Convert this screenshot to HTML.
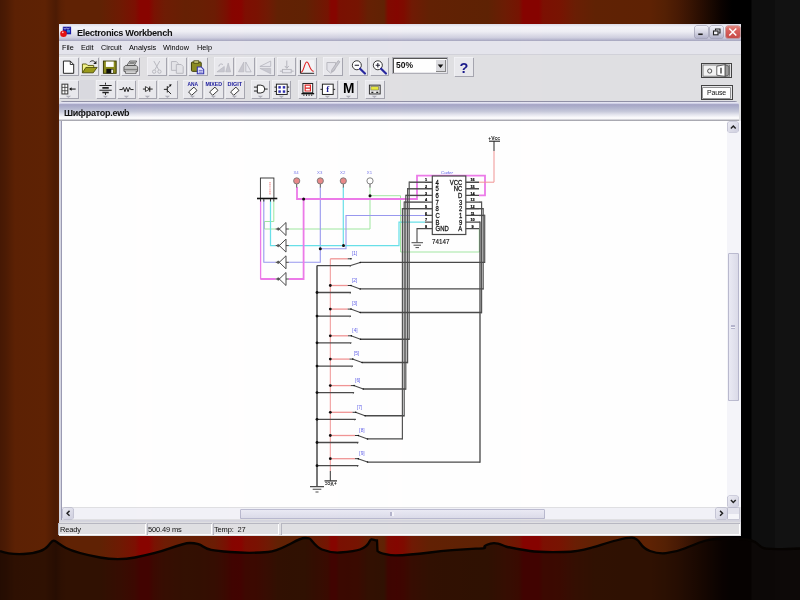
<!DOCTYPE html>
<html><head><meta charset="utf-8"><title>Electronics Workbench</title>
<style>
html,body{margin:0;padding:0;}
body{width:800px;height:600px;overflow:hidden;position:relative;background:#000;font-family:"Liberation Sans",sans-serif;}
#bg{position:absolute;left:0;top:0;width:800px;height:600px;}
#win{opacity:0.999;position:absolute;left:59px;top:24px;width:682px;height:512px;background:#e0e0e3;}
.abs{position:absolute;}
#title{left:0;top:0;width:682px;height:16.500px;background:linear-gradient(#dcdce8 0%,#f4f4fa 18%,#eeeef4 45%,#d0d0e0 80%,#b4b4cc 94%,#a4a4bc 100%);}
#title span{position:absolute;left:17.900px;top:3.500px;font-size:9.200px;font-weight:bold;color:#111;letter-spacing:-0.320px;white-space:nowrap;}
#menu{left:0;top:16.500px;width:682px;height:13.500px;background:#e5e5ed;font-size:7.300px;color:#000;border-bottom:1px solid #d2d2da;}
#menu span{position:absolute;top:2.600px;}
.tb{position:absolute;width:19px;height:19px;background:#e9e9ed;box-shadow:inset 0.700px 0.700px 0 #f4f4f8,inset -1px -1px 0 #a6a6b0;}
#ctitle{left:0.300px;top:76.500px;width:680.200px;height:20.200px;border-radius:4.500px 4.500px 0 0;background:linear-gradient(#8c8ca2 0%,#9494aa 4%,#f0f0fc 8%,#d4d4ea 12%,#a6a6c6 18%,#b4b6d0 35%,#c6c9da 52%,#e4e5ee 68%,#f4f4f8 78%,#fff 86%,#ececf0 91%,#a2a2aa 96%,#b8b8c0 100%);}
#ctitle span{position:absolute;left:5px;top:7.400px;font-size:9px;font-weight:bold;color:#111;letter-spacing:-0.250px;white-space:nowrap;}
#canvas{left:3px;top:97px;width:665px;height:386px;background:#fff;}
#vsb{left:668px;top:97px;width:14px;height:386px;background:#f5f5fa;}
#hsb{left:3px;top:484px;width:665px;height:11px;background:#f2f2f8;}
#status{left:0;top:499.400px;width:682px;height:13px;font-size:7.500px;letter-spacing:-0.160px;color:#111;}
.sp{position:absolute;top:0;height:12px;box-shadow:inset 1px 1px 0 #b8b8c2,inset -1px -1px 0 #fff;}
.sp span{position:absolute;left:1px;top:2px;white-space:pre;}
.sbb{position:absolute;width:10.600px;height:10.600px;background:linear-gradient(135deg,#ececf4,#d0d0e0);border-radius:1.500px;box-shadow:0 0 0 0.600px #a8a8c0;}
.sbb svg{display:block;width:10.600px;height:10.600px;}
.tb svg{display:block;}
.tb.flat{background:#dadae0;box-shadow:none;}
.combo{position:absolute;background:#fff;box-shadow:inset 1px 1px 0 #555,inset -1px -1px 0 #e8e8ec,0 0 0 1px #b0b0b8;}
.combo span{position:absolute;left:3px;top:2.500px;font-size:8.500px;font-weight:bold;color:#111;}
.combo .dd{position:absolute;right:1px;top:1px;width:11px;height:13.400px;background:#dcdce0;box-shadow:inset 1px 1px 0 #fff,inset -1px -1px 0 #888;}
.q{position:absolute;left:0;top:2.500px;width:100%;text-align:center;font-size:14.500px;font-weight:bold;color:#1c1c8c;line-height:17px;}
#circ{position:absolute;left:0;top:0;width:800px;height:600px;}
.cb{position:absolute;top:2.400px;height:12px;border-radius:2px;box-shadow:0 0 0 0.600px #8c8ca4;background:linear-gradient(#f2f2fa 0%,#dcdce8 45%,#b4b4cc 100%);}
.cb svg{display:block;width:100%;height:100%;}
#pwr{left:642.300px;top:38.700px;width:30.700px;height:15px;background:#ececee;box-shadow:inset 0 0 0 1px #444;}
#pause{left:642.300px;top:61.400px;width:31.400px;height:15px;background:#d4d4d8;box-shadow:inset 0 0 0 1px #444,inset 0 0 0 2px #e8e8ea;}
#pause div{position:absolute;left:2.200px;top:2.300px;right:2.200px;bottom:2.700px;background:#fff;box-shadow:0 0 0 0.700px #777;font-size:7px;text-align:center;line-height:10px;color:#111;letter-spacing:-0.200px;}
.thumb{position:absolute;background:linear-gradient(90deg,#ececf6,#dadae8);border-radius:1.500px;box-shadow:inset 0 0 0 0.800px #aeaec6;}
#win span,#pause div,.tb svg{will-change:transform;}
</style></head><body>
<svg id="bg" viewBox="0 0 800 600">
<defs>
<linearGradient id="stripes" x1="0" x2="1" y1="0" y2="0">
<stop offset="0.0000" stop-color="#451804"/>
<stop offset="0.0075" stop-color="#4c1b04"/>
<stop offset="0.0187" stop-color="#5c2104"/>
<stop offset="0.0563" stop-color="#5e2204"/>
<stop offset="0.0638" stop-color="#541e04"/>
<stop offset="0.0700" stop-color="#4c1b04"/>
<stop offset="0.0762" stop-color="#5a2004"/>
<stop offset="0.0825" stop-color="#602204"/>
<stop offset="0.1250" stop-color="#602204"/>
<stop offset="0.1500" stop-color="#6e1a03"/>
<stop offset="0.1688" stop-color="#7c1002"/>
<stop offset="0.1750" stop-color="#880400"/>
<stop offset="0.1862" stop-color="#880400"/>
<stop offset="0.1925" stop-color="#7a1202"/>
<stop offset="0.2062" stop-color="#6e1c04"/>
<stop offset="0.2313" stop-color="#662004"/>
<stop offset="0.2500" stop-color="#681f04"/>
<stop offset="0.2687" stop-color="#6c1c04"/>
<stop offset="0.2825" stop-color="#7a1002"/>
<stop offset="0.2900" stop-color="#860500"/>
<stop offset="0.3013" stop-color="#880400"/>
<stop offset="0.3063" stop-color="#7e0e02"/>
<stop offset="0.3212" stop-color="#7a1202"/>
<stop offset="0.3350" stop-color="#701a04"/>
<stop offset="0.3475" stop-color="#622104"/>
<stop offset="0.3812" stop-color="#602204"/>
<stop offset="0.3975" stop-color="#6c1a03"/>
<stop offset="0.4100" stop-color="#761402"/>
<stop offset="0.4138" stop-color="#860500"/>
<stop offset="0.4200" stop-color="#860500"/>
<stop offset="0.4238" stop-color="#7a1002"/>
<stop offset="0.4475" stop-color="#761402"/>
<stop offset="0.4600" stop-color="#662004"/>
<stop offset="0.4800" stop-color="#602204"/>
<stop offset="0.4850" stop-color="#800a00"/>
<stop offset="0.4963" stop-color="#840600"/>
<stop offset="0.5050" stop-color="#7e0c00"/>
<stop offset="0.5150" stop-color="#701a04"/>
<stop offset="0.5375" stop-color="#622104"/>
<stop offset="0.6100" stop-color="#5e2204"/>
<stop offset="0.6312" stop-color="#6c1c04"/>
<stop offset="0.6488" stop-color="#761402"/>
<stop offset="0.6538" stop-color="#860300"/>
<stop offset="0.6737" stop-color="#860300"/>
<stop offset="0.6787" stop-color="#7c1002"/>
<stop offset="0.7000" stop-color="#781402"/>
<stop offset="0.7188" stop-color="#6a1e04"/>
<stop offset="0.7438" stop-color="#602204"/>
<stop offset="0.8125" stop-color="#5e2204"/>
<stop offset="0.8313" stop-color="#542004"/>
<stop offset="0.8475" stop-color="#481a04"/>
<stop offset="0.8625" stop-color="#381403"/>
<stop offset="0.8750" stop-color="#2a0e02"/>
<stop offset="0.8900" stop-color="#180801"/>
<stop offset="0.9025" stop-color="#0a0200"/>
<stop offset="0.9150" stop-color="#000"/>
<stop offset="1.0000" stop-color="#000"/>
</linearGradient>
</defs>
<rect x="0" y="0" width="800" height="600" fill="url(#stripes)"/>
<rect x="751.500" y="0" width="48.500" height="600" fill="#0e0e0e"/><rect x="775" y="0" width="25" height="600" fill="#121212"/>
<path d="M0,551 C5,553 15,554.500 24,554 S44,551 48,546 S53,540 55,541 S62,546 66,548 S84,554.500 100,557.500 S125,559.500 135,557.500 S160,552 169,548.700 S185,543 190,543 S199,543.500 203,546.500 S212,550.500 230,552 S260,552.700 268,552 S282,548 288,545 S300,538 305,538 S310,538.500 312,541 S318,548 322,549.500 S334,553 340,552.500 S356,551 360,549.500 S368,545 369.500,541.500 S372,539.500 377,540.500 L377.500,551 C380,553.500 390,555.500 396,555.400 S420,553.700 430,552.500 S460,549.500 476,548.700 S481,547.800 485.500,545.600 S490,543.100 494,543.100 S501,544.600 505.500,546.300 S520,549.500 530,551 S550,552.300 564,552 S585,549.500 592,547.500 S610,542 616,540.500 S628,537.300 632,537.700 S638,540 640,543 S646,549.500 650,551 S660,553.800 666,553.200 S680,550.500 686,548 S700,542 706,540.500 S720,538.500 730,538.500 S750,539 755,542 S760,548 766,548.700 S790,549 800,548.500 L800,600 L0,600 Z" fill="rgba(10,4,2,0.56)"/>
<path id="wave" d="M0,551 C5,553 15,554.500 24,554 S44,551 48,546 S53,540 55,541 S62,546 66,548 S84,554.500 100,557.500 S125,559.500 135,557.500 S160,552 169,548.700 S185,543 190,543 S199,543.500 203,546.500 S212,550.500 230,552 S260,552.700 268,552 S282,548 288,545 S300,538 305,538 S310,538.500 312,541 S318,548 322,549.500 S334,553 340,552.500 S356,551 360,549.500 S368,545 369.500,541.500 S372,539.500 377,540.500 L377.500,551 C380,553.500 390,555.500 396,555.400 S420,553.700 430,552.500 S460,549.500 476,548.700 S481,547.800 485.500,545.600 S490,543.100 494,543.100 S501,544.600 505.500,546.300 S520,549.500 530,551 S550,552.300 564,552 S585,549.500 592,547.500 S610,542 616,540.500 S628,537.300 632,537.700 S638,540 640,543 S646,549.500 650,551 S660,553.800 666,553.200 S680,550.500 686,548 S700,542 706,540.500 S720,538.500 730,538.500 S750,539 755,542 S760,548 766,548.700 S790,549 800,548.500" fill="none" stroke="#060301" stroke-width="2.3"/>


</svg>
<div id="win">
 <div id="title" class="abs"><span>Electronics Workbench</span><svg class="abs" style="left:1px;top:2px;width:13px;height:12px" viewBox="0 0 13 12"><rect x="2.800" y="0.700" width="8.300" height="7.600" fill="#1c1ca4"/><path d="M3.500,1.800l1.500,1.500 1.500,-1.500 1.500,1.500 1.500,-1.500" stroke="#c8c8f0" stroke-width="0.900" fill="none"/><rect x="7" y="4" width="3" height="2.500" fill="#3088e0"/><circle cx="3.500" cy="7.700" r="3.300" fill="#e41414"/><circle cx="2.800" cy="6.300" r="0.900" fill="#ffc0c0"/></svg>
 <div class="cb" style="left:636.400px;width:12.800px"><svg viewBox="0 0 13 12"><rect x="3.300" y="7.500" width="4.500" height="1.600" fill="#222"/></svg></div>
 <div class="cb" style="left:651.400px;width:13px"><svg viewBox="0 0 13 12"><path d="M5.500,4.500v-1.500h4.500v4h-1.500" fill="none" stroke="#222" stroke-width="1.100"/><rect x="3.500" y="5" width="4.500" height="3.800" fill="#f4f4fa" stroke="#222" stroke-width="1.100"/></svg></div>
 <div class="cb" style="left:667px;width:13.600px;background:linear-gradient(#e48880 0%,#d8605c 40%,#c84c48 100%);box-shadow:0 0 0 0.600px #b87070"><svg viewBox="0 0 13.600 12"><path d="M3.300,2.500l7,7M10.300,2.500l-7,7" stroke="#fff" stroke-width="1.500"/></svg></div></div>
 <div id="menu" class="abs"><span style="left:3.400px">File</span><span style="left:22.200px">Edit</span><span style="left:42.300px">Circuit</span><span style="left:70.200px">Analysis</span><span style="left:104.400px">Window</span><span style="left:137.800px">Help</span></div>
<div id="pwr" class="abs"><svg viewBox="0 0 30.700 15" width="100%" height="100%"><rect x="2" y="2" width="26.700" height="11.200" fill="#f4f4f4" stroke="#666" stroke-width="0.800"/><circle cx="8.700" cy="8" r="2.100" fill="none" stroke="#444" stroke-width="0.900"/><path d="M15.800,3.200l8.400,-1.600v11.800l-8.400,-1.200z" fill="#fff" stroke="#444" stroke-width="0.800"/><path d="M24.200,1.600l3.800,1.800v8.400l-3.800,1.600z" fill="#9c9c9c" stroke="#444" stroke-width="0.700"/><path d="M20,4.800v5.600" stroke="#333" stroke-width="1.300"/></svg></div>
<div id="pause" class="abs"><div>Pause</div></div>
<!--TB-->
<div class="tb" style="left:0.4px;top:33.4px;width:19.6px;height:18.9px"><svg viewBox="0 0 20 18" width="100%" height="100%"><path d="M4.5,3.5h7l3.5,3.5v9h-10.5z" fill="#fff" stroke="#222" stroke-width="1"/><path d="M11.500,3.500v3.500h3.500" fill="none" stroke="#222" stroke-width="0.9"/></svg></div>
<div class="tb" style="left:20.8px;top:33.4px;width:19.6px;height:18.9px"><svg viewBox="0 0 20 18" width="100%" height="100%"><path d="M2.500,15.500v-9h4l1.500,1.500h6v2.500" fill="#f4f48c" stroke="#55550a" stroke-width="0.9"/><path d="M2.500,15.500l3.500,-5.500h11.500l-4,5.500z" fill="#9c9c1c" stroke="#4a4a08" stroke-width="0.9"/><path d="M10,4.500c2,-2 4.500,-1.500 5.500,0.500" fill="none" stroke="#222" stroke-width="1"/><path d="M16.800,3.200v3.300h-3.300z" fill="#222"/></svg></div>
<div class="tb" style="left:41.2px;top:33.4px;width:19.6px;height:18.9px"><svg viewBox="0 0 20 18" width="100%" height="100%"><rect x="3.500" y="3.500" width="13" height="12.500" fill="#8c8c1e" stroke="#3c3c08" stroke-width="1"/><rect x="6" y="4" width="8" height="5.500" fill="#fff"/><rect x="6.500" y="11.500" width="7" height="4.500" fill="#111"/><rect x="11.500" y="12.200" width="1.800" height="3.500" fill="#eee"/></svg></div>
<div class="tb" style="left:61.7px;top:33.4px;width:19.6px;height:18.9px"><svg viewBox="0 0 20 18" width="100%" height="100%"><path d="M6,8l3,-4.500h7l-2.500,4.500z" fill="#ddd" stroke="#444" stroke-width="0.8"/><path d="M3,9.500l1.500,-1.500h11l1.500,1.500v4.500h-14z" fill="#c4c4c4" stroke="#444" stroke-width="0.8"/><path d="M3,12h14" stroke="#666" stroke-width="0.8"/><path d="M4.500,14v2h11v-2" fill="#eee" stroke="#444" stroke-width="0.800"/><path d="M9,4.500l5.500,0 -1,2h-5.500z" fill="#888"/></svg></div>
<div class="tb" style="left:88.0px;top:33.4px;width:19.6px;height:18.9px"><svg viewBox="0 0 20 18" width="100%" height="100%"><path d="M7,3.500l5,9M13,3.500l-5,9" stroke="#b8b8c0" stroke-width="1" fill="none"/><circle cx="7.300" cy="14.300" r="1.700" fill="none" stroke="#b8b8c0"/><circle cx="12.700" cy="14.300" r="1.700" fill="none" stroke="#b8b8c0"/></svg></div>
<div class="tb" style="left:108.6px;top:33.4px;width:19.6px;height:18.9px"><svg viewBox="0 0 20 18" width="100%" height="100%"><path d="M3.500,4h5l2,2v7h-7z" fill="#e4e4e8" stroke="#b8b8c0" stroke-width="1"/><path d="M8.500,7h5l2,2v7h-7z" fill="#e4e4e8" stroke="#b8b8c0" stroke-width="1"/></svg></div>
<div class="tb" style="left:129.0px;top:33.4px;width:19.6px;height:18.9px"><svg viewBox="0 0 20 18" width="100%" height="100%"><rect x="3.500" y="4.500" width="10" height="9.500" rx="1" fill="#8c8c22" stroke="#3c3c08" stroke-width="1"/><rect x="6" y="3.200" width="5" height="2.500" fill="#c8c878" stroke="#3c3c08" stroke-width="0.700"/><path d="M9.500,9.500h4l2.500,2.500v4.500h-6.500z" fill="#e8e8ff" stroke="#3838b0" stroke-width="1.100"/><path d="M11,13h4M11,14.800h4" stroke="#3838b0" stroke-width="0.700"/></svg></div>
<div class="tb" style="left:155.3px;top:33.4px;width:19.6px;height:18.9px"><svg viewBox="0 0 20 18" width="100%" height="100%"><path d="M3,14.500h7.500v-5.500zM12,14.500h5l-2.500,-9z" fill="#c8c8d0" stroke="#b4b4bc" stroke-width="0.600"/><path d="M5,9c0,-2.500 2.500,-3 4,-2" fill="none" stroke="#b4b4bc" stroke-width="1"/></svg></div>
<div class="tb" style="left:176.1px;top:33.4px;width:19.6px;height:18.9px"><svg viewBox="0 0 20 18" width="100%" height="100%"><path d="M9,4.500v10h-5.500z" fill="#c8c8d0" stroke="#b4b4bc" stroke-width="0.600"/><path d="M11,4.500v10h5.500z" fill="#e8e8ee" stroke="#b4b4bc" stroke-width="0.800"/></svg></div>
<div class="tb" style="left:196.9px;top:33.4px;width:19.6px;height:18.9px"><svg viewBox="0 0 20 18" width="100%" height="100%"><path d="M4,9h11v-5.500z" fill="#e8e8ee" stroke="#b4b4bc" stroke-width="0.800"/><path d="M4,11h11v5.500z" fill="#c8c8d0" stroke="#b4b4bc" stroke-width="0.600"/></svg></div>
<div class="tb" style="left:217.7px;top:33.4px;width:19.6px;height:18.9px"><svg viewBox="0 0 20 18" width="100%" height="100%"><path d="M10,3v7.500M8,8.500l2,2.500 2,-2.500" fill="none" stroke="#b4b4bc" stroke-width="1"/><rect x="5.500" y="12" width="9" height="3.500" fill="#e8e8ee" stroke="#b4b4bc" stroke-width="0.900"/><path d="M3,13.800h2.500M14.500,13.800h2.500" stroke="#b4b4bc" stroke-width="1"/></svg></div>
<div class="tb" style="left:238.3px;top:33.4px;width:19.6px;height:18.9px"><svg viewBox="0 0 20 18" width="100%" height="100%"><rect x="3" y="2.500" width="14.500" height="13.500" fill="#f4f4f6"/><path d="M3.500,2.500v13.500h14" fill="none" stroke="#222" stroke-width="1"/><path d="M4,15c3,0 3.500,-10.500 6,-10.500s3,9.500 7,9.500" fill="none" stroke="#e02020" stroke-width="1.100"/></svg></div>
<div class="tb" style="left:264.1px;top:33.4px;width:19.6px;height:18.9px"><svg viewBox="0 0 20 18" width="100%" height="100%"><path d="M4,5h9l-1,7.500l-4,3.500l-4,-3.500z" fill="#e4e4ea" stroke="#b4b4bc" stroke-width="0.900"/><path d="M9,12.500l6.500,-9.500 1.800,1.200-6.500,9.500-2.300,0.800z" fill="#c8c8d0" stroke="#a8a8b0" stroke-width="0.700"/></svg></div>
<div class="tb" style="left:289.9px;top:33.4px;width:19.6px;height:18.9px"><svg viewBox="0 0 20 18" width="100%" height="100%"><circle cx="8" cy="7.800" r="4.600" fill="#fff" stroke="#333" stroke-width="1"/><path d="M5.800,7.800h4.400" stroke="#223" stroke-width="1.100"/><path d="M11.300,11.300l5,5" stroke="#2828a0" stroke-width="2.200" stroke-linecap="round"/></svg></div>
<div class="tb" style="left:310.5px;top:33.4px;width:19.6px;height:18.9px"><svg viewBox="0 0 20 18" width="100%" height="100%"><circle cx="8" cy="7.800" r="4.600" fill="#fff" stroke="#333" stroke-width="1"/><path d="M5.800,7.800h4.400M8,5.600v4.400" stroke="#223" stroke-width="1.100"/><path d="M11.300,11.300l5,5" stroke="#2828a0" stroke-width="2.200" stroke-linecap="round"/></svg></div>
<div class="combo" style="left:333.5px;top:33.6px;width:54px;height:15.4px"><span>50%</span><div class="dd"><svg viewBox="0 0 10 12" width="100%" height="100%"><path d="M2.500,5h5l-2.500,3z" fill="#111"/></svg></div></div>
<div class="tb" style="left:395.0px;top:33.2px;width:20.0px;height:19.4px"><span class="q">?</span></div>
<div class="tb" style="left:0.4px;top:55.6px;width:19.6px;height:19.1px"><svg viewBox="0 0 20 18" width="100%" height="100%"><rect x="3" y="3.500" width="6" height="10" fill="#fff" stroke="#333" stroke-width="1"/><path d="M3,6.800h6M3,10.200h6M6,3.500v10" stroke="#333" stroke-width="0.800"/><path d="M11.500,8.500h5.500" stroke="#222" stroke-width="1.100"/><path d="M10.300,8.500l2.500,-1.800v3.600z" fill="#111"/><path d="M6.800,15.400h5.600l-2.800,2.300z" fill="#b0b0ba"/></svg></div>
<div class="tb" style="left:37.3px;top:55.6px;width:19.6px;height:19.1px"><svg viewBox="0 0 20 18" width="100%" height="100%"><path d="M9.700,2v2M9.700,12.500v2" stroke="#222" stroke-width="1"/><path d="M3.500,4.800h12.500M3.500,9.800h12.500" stroke="#222" stroke-width="1.100"/><path d="M6.500,7.300h6.500M6.500,12h6.500" stroke="#222" stroke-width="1.700"/><path d="M6.800,15.400h5.600l-2.800,2.300z" fill="#b0b0ba"/></svg></div>
<div class="tb" style="left:57.9px;top:55.6px;width:19.6px;height:19.1px"><svg viewBox="0 0 20 18" width="100%" height="100%"><path d="M2.500,9h3l1,-2.200 1.600,4.400 1.600,-4.400 1.600,4.400 1.600,-4.400 1,2.200h3" fill="none" stroke="#222" stroke-width="1"/><path d="M6.800,15.400h5.600l-2.800,2.300z" fill="#b0b0ba"/></svg></div>
<div class="tb" style="left:78.5px;top:55.6px;width:19.6px;height:19.1px"><svg viewBox="0 0 20 18" width="100%" height="100%"><path d="M5,8.500h10" stroke="#222" stroke-width="1"/><path d="M7.600,6v5l4.200,-2.500z" fill="#fff" stroke="#222" stroke-width="0.900"/><path d="M12,5.800v5.400" stroke="#222" stroke-width="1.100"/><path d="M6.800,15.400h5.600l-2.800,2.300z" fill="#b0b0ba"/></svg></div>
<div class="tb" style="left:99.3px;top:55.6px;width:19.6px;height:19.1px"><svg viewBox="0 0 20 18" width="100%" height="100%"><path d="M6,8.800h3.500M9.500,5.500v6.500M9.500,7.800l3.800,-3.800M9.500,9.800l3.800,3.800" fill="none" stroke="#222" stroke-width="1"/><path d="M13.600,3.600l-2.600,0.400 2.200,2.200z" fill="#111"/><path d="M6.800,15.400h5.600l-2.800,2.300z" fill="#b0b0ba"/></svg></div>
<div class="tb" style="left:124.3px;top:55.6px;width:19.6px;height:19.1px"><svg viewBox="0 0 20 18" width="100%" height="100%"><text x="10" y="5.300" font-size="5" font-weight="bold" fill="#2020a0" text-anchor="middle" font-family="Liberation Sans, sans-serif">ANA</text><rect x="-3.700" y="-2.300" width="7.400" height="4.600" transform="translate(10,10.700) rotate(-42)" fill="#fff" stroke="#333" stroke-width="0.900"/><path d="M6.800,15.400h5.600l-2.800,2.300z" fill="#b0b0ba"/></svg></div>
<div class="tb" style="left:145.3px;top:55.6px;width:19.6px;height:19.1px"><svg viewBox="0 0 20 18" width="100%" height="100%"><text x="10" y="5.300" font-size="5" font-weight="bold" fill="#2020a0" text-anchor="middle" font-family="Liberation Sans, sans-serif" textLength="17" lengthAdjust="spacingAndGlyphs">MIXED</text><rect x="-3.700" y="-2.300" width="7.400" height="4.600" transform="translate(10,10.700) rotate(-42)" fill="#fff" stroke="#333" stroke-width="0.900"/><path d="M6.800,15.400h5.600l-2.800,2.300z" fill="#b0b0ba"/></svg></div>
<div class="tb" style="left:166.1px;top:55.6px;width:19.6px;height:19.1px"><svg viewBox="0 0 20 18" width="100%" height="100%"><text x="10" y="5.300" font-size="5" font-weight="bold" fill="#2020a0" text-anchor="middle" font-family="Liberation Sans, sans-serif" textLength="15" lengthAdjust="spacingAndGlyphs">DIGIT</text><rect x="-3.700" y="-2.300" width="7.400" height="4.600" transform="translate(10,10.700) rotate(-42)" fill="#fff" stroke="#333" stroke-width="0.900"/><path d="M6.800,15.400h5.600l-2.800,2.300z" fill="#b0b0ba"/></svg></div>
<div class="tb" style="left:191.9px;top:55.6px;width:19.6px;height:19.1px"><svg viewBox="0 0 20 18" width="100%" height="100%"><path d="M3,6.500h3.500M3,10.500h3.500M14,8.500h3" stroke="#222" stroke-width="1"/><path d="M6.500,4.500h3.500a4,4 0 0 1 0,8h-3.500z" fill="#fff" stroke="#222" stroke-width="1"/><path d="M6.800,15.400h5.600l-2.800,2.300z" fill="#b0b0ba"/></svg></div>
<div class="tb" style="left:212.5px;top:55.6px;width:19.6px;height:19.1px"><svg viewBox="0 0 20 18" width="100%" height="100%"><rect x="4.500" y="3.500" width="11" height="10.500" fill="#fff" stroke="#222" stroke-width="1"/><path d="M2.500,6.500h2M2.500,11h2M15.500,6.500h2M15.500,11h2" stroke="#222" stroke-width="1"/><rect x="6.500" y="5.500" width="2.500" height="2.500" fill="#3030b0"/><rect x="11" y="5.500" width="2.500" height="2.500" fill="#3030b0"/><rect x="6.500" y="9.800" width="2.500" height="2.500" fill="#3030b0"/><rect x="11" y="9.800" width="2.500" height="2.500" fill="#3030b0"/><path d="M6.800,15.400h5.600l-2.800,2.300z" fill="#b0b0ba"/></svg></div>
<div class="tb" style="left:238.7px;top:55.6px;width:19.6px;height:19.1px"><svg viewBox="0 0 20 18" width="100%" height="100%"><rect x="5" y="2.800" width="10" height="9.500" fill="#fff" stroke="#222" stroke-width="1"/><path d="M7.300,4.500h5.400v6h-5.400zM7.300,7.500h5.400" fill="none" stroke="#e02828" stroke-width="1.200"/><path d="M3.500,13.200h13" stroke="#111" stroke-width="1.400"/><path d="M6,14v1.500M8.700,14v1.500M11.300,14v1.500M14,14v1.500" stroke="#111" stroke-width="0.900"/></svg></div>
<div class="tb" style="left:259.1px;top:55.6px;width:19.6px;height:19.1px"><svg viewBox="0 0 20 18" width="100%" height="100%"><rect x="4.500" y="3.500" width="11" height="10.500" fill="#fff" stroke="#222" stroke-width="1"/><path d="M2.500,8.800h2M15.500,8.800h2" stroke="#222" stroke-width="1"/><text x="10" y="12" font-size="9" font-weight="bold" fill="#1c1c90" text-anchor="middle" font-family="Liberation Serif, serif">f</text><path d="M6.800,15.400h5.600l-2.800,2.300z" fill="#b0b0ba"/></svg></div>
<div class="tb" style="left:279.7px;top:55.6px;width:19.6px;height:19.1px"><svg viewBox="0 0 20 18" width="100%" height="100%"><text x="10" y="13" font-size="14" font-weight="bold" fill="#000" text-anchor="middle" font-family="Liberation Sans, sans-serif">M</text><path d="M6.800,15.400h5.600l-2.800,2.300z" fill="#b0b0ba"/></svg></div>
<div class="tb" style="left:306.3px;top:55.6px;width:19.6px;height:19.1px"><svg viewBox="0 0 20 18" width="100%" height="100%"><rect x="4.500" y="4.500" width="11" height="9" fill="#e8e8e8" stroke="#333" stroke-width="1"/><rect x="6" y="5.800" width="8" height="3.700" fill="#e8e840" stroke="#555" stroke-width="0.500"/><path d="M6.500,11.800h2M11.500,11.800h2" stroke="#222" stroke-width="1.300"/><path d="M6.800,15.400h5.600l-2.800,2.300z" fill="#b0b0ba"/></svg></div>
<div class="tb flat" style="left:21.2px;top:55.6px;width:14.6px;height:19.1px"></div>
<!--/TB-->
 <div id="ctitle" class="abs"><span>Шифратор.ewb</span></div>
 <div class="abs" style="left:0;top:97px;width:2.800px;height:400px;background:linear-gradient(90deg,#d6d6e2 0,#d6d6e2 65%,#9c9cb4 75%,#9c9cb4 100%)"></div>
 <div class="abs" style="left:0;top:495.600px;width:682px;height:2.600px;background:linear-gradient(#d4d4de 0,#d4d4de 25%,#b0b0c0 45%,#d0d0da 70%,#f4f4f8 100%)"></div>
 <div id="canvas" class="abs"></div>
 <div id="vsb" class="abs"><div class="sbb" style="left:0.500px;top:0.500px"><svg viewBox="0 0 11 11" width="11" height="11"><path d="M3,6.800l2.500,-2.600 2.500,2.600" fill="none" stroke="#222" stroke-width="1.500"/></svg></div><div class="thumb" style="left:0.500px;top:132px;width:11px;height:148px"><div style="position:absolute;left:3.500px;top:72px;width:4px;height:4px;background:repeating-linear-gradient(#b4b4cc 0,#b4b4cc 0.700px,#f4f4fa 0.700px,#f4f4fa 1.400px)"></div></div><div class="sbb" style="left:0.500px;top:375px"><svg viewBox="0 0 11 11" width="11" height="11"><path d="M3,4.200l2.500,2.600 2.500,-2.600" fill="none" stroke="#222" stroke-width="1.500"/></svg></div></div>
 <div id="hsb" class="abs"><div class="sbb" style="left:0.500px;top:0.300px"><svg viewBox="0 0 11 11" width="11" height="11"><path d="M6.800,3l-2.600,2.500 2.600,2.500" fill="none" stroke="#222" stroke-width="1.500"/></svg></div><div class="thumb" style="left:178px;top:0.500px;width:305px;height:10px;background:linear-gradient(#ececf6,#dadae8)"><div style="position:absolute;left:150px;top:3px;width:4px;height:4px;background:repeating-linear-gradient(90deg,#b4b4cc 0,#b4b4cc 0.700px,#f4f4fa 0.700px,#f4f4fa 1.400px)"></div></div><div class="sbb" style="left:654px;top:0.300px"><svg viewBox="0 0 11 11" width="11" height="11"><path d="M4.200,3l2.600,2.500 -2.600,2.500" fill="none" stroke="#222" stroke-width="1.500"/></svg></div></div>
 <div class="abs" style="left:668.500px;top:484.300px;width:11px;height:11px;background:linear-gradient(#e4e4ee 0,#e4e4ee 50%,#f6f6fa 50%,#f6f6fa 100%);box-shadow:0 0 0 0.600px #b8b8cc"></div>
 <div id="status" class="abs">
  <div class="sp" style="left:-1px;width:88px"><span style="left:1.600px">Ready</span></div>
  <div class="sp" style="left:87.500px;width:65px"><span>500.49 ms</span></div>
  <div class="sp" style="left:154.300px;width:66px"><span>Temp:  27</span></div>
  <div class="sp" style="left:222px;width:459px"></div>
 </div>
</div>
<!--CIRC-->
<svg id="circ" viewBox="0 0 800 600" font-family="Liberation Sans, sans-serif">
<path d="M370,187V229H288.700M275.600,229H264.400V221.500H273.800V200" stroke="#9ee69e" stroke-width="1" fill="none" />
<path d="M370,195.700H400.500V252H479.300V228.500" stroke="#9ee69e" stroke-width="0.95" fill="none" />
<path d="M320.300,187V262.300H288.700M275.600,262.300H263.800V200" stroke="#9898ee" stroke-width="1.1" fill="none" />
<path d="M320.300,248.800H346V215.500H425" stroke="#9898ee" stroke-width="1.1" fill="none" />
<path d="M343.300,187V245.600" stroke="#68dfe8" stroke-width="1.2" fill="none" />
<path d="M270.500,200V245.600H275.600M288.700,245.600H399V222.200H425" stroke="#68dfe8" stroke-width="1.25" fill="none" />
<path d="M297,187V199H417V175.600H485V195.400H479" stroke="#ec7ae8" stroke-width="1.8" fill="none" />
<path d="M303.600,199V279H288.700M275.600,279H260.600" stroke="#ec7ae8" stroke-width="1.8" fill="none" />
<path d="M260.600,279.500V200" stroke="#ec7ae8" stroke-width="1.3" fill="none" />
<rect x="260.400" y="178" width="13.500" height="20.500" fill="#fff" stroke="#2c2c2c" stroke-width="0.900"/>
<path d="M257,198.500H277.300" stroke="#111" stroke-width="1.6" fill="none" />
<path d="M260.500,199v2.500M263.800,199v2.500M270.500,199v2.500M273.800,199v2.500" stroke="#333" stroke-width="1" fill="none" />
<path d="M270,182V195" stroke="#f09090" stroke-width="1.2" fill="none" stroke-dasharray="1.2 0.6"/>
<path d="M296.7,184V187.500" stroke="#555" stroke-width="1" fill="none" />
<circle cx="296.7" cy="180.900" r="3.100" fill="#e88888" stroke="#777" stroke-width="0.900"/>
<text x="296.09999999999997" y="173.7" font-size="4.3" fill="#7878ea" text-anchor="middle"  >X4</text>
<path d="M320.3,184V187.500" stroke="#555" stroke-width="1" fill="none" />
<circle cx="320.3" cy="180.900" r="3.100" fill="#e88888" stroke="#777" stroke-width="0.900"/>
<text x="319.7" y="173.7" font-size="4.3" fill="#7878ea" text-anchor="middle"  >X3</text>
<path d="M343.3,184V187.500" stroke="#555" stroke-width="1" fill="none" />
<circle cx="343.3" cy="180.900" r="3.100" fill="#e88888" stroke="#777" stroke-width="0.900"/>
<text x="342.7" y="173.7" font-size="4.3" fill="#7878ea" text-anchor="middle"  >X2</text>
<path d="M370,184V187.500" stroke="#555" stroke-width="1" fill="none" />
<circle cx="370" cy="180.900" r="3.100" fill="#fff" stroke="#777" stroke-width="0.900"/>
<text x="369.4" y="173.7" font-size="4.3" fill="#7878ea" text-anchor="middle"  >X1</text>
<path d="M286,222.5V235.5L279.300,229Z" fill="#fff" stroke="#4a4a4a" stroke-width="1"/>
<circle cx="278.300" cy="229" r="1.200" fill="#555" stroke="#4a4a4a" stroke-width="0.600"/>
<path d="M286,229H288.800M277,229H275.600" stroke="#444" stroke-width="1" fill="none" />
<path d="M286,239.1V252.1L279.300,245.6Z" fill="#fff" stroke="#4a4a4a" stroke-width="1"/>
<circle cx="278.300" cy="245.6" r="1.200" fill="#555" stroke="#4a4a4a" stroke-width="0.600"/>
<path d="M286,245.6H288.800M277,245.6H275.600" stroke="#444" stroke-width="1" fill="none" />
<path d="M286,255.8V268.8L279.300,262.3Z" fill="#fff" stroke="#4a4a4a" stroke-width="1"/>
<circle cx="278.300" cy="262.3" r="1.200" fill="#555" stroke="#4a4a4a" stroke-width="0.600"/>
<path d="M286,262.3H288.800M277,262.3H275.600" stroke="#444" stroke-width="1" fill="none" />
<path d="M286,272.5V285.5L279.300,279Z" fill="#fff" stroke="#4a4a4a" stroke-width="1"/>
<circle cx="278.300" cy="279" r="1.200" fill="#555" stroke="#4a4a4a" stroke-width="0.600"/>
<path d="M286,279H288.800M277,279H275.600" stroke="#444" stroke-width="1" fill="none" />
<rect x="432.300" y="176" width="33.500" height="58.500" fill="#fff" stroke="#4a4a4a" stroke-width="1.200"/>
<path d="M425,182.2H432.300M465.800,182.2H479" stroke="#4a4a4a" stroke-width="1.4" fill="none" />
<text x="426" y="181.39999999999998" font-size="3.8" fill="#000" text-anchor="middle" font-weight="bold" stroke="#000" stroke-width="0.2">1</text>
<text x="472.4" y="181.39999999999998" font-size="3.8" fill="#000" text-anchor="middle" font-weight="bold" stroke="#000" stroke-width="0.2" letter-spacing="-0.3">16</text>
<path d="M425,188.8H432.300M465.800,188.8H479" stroke="#4a4a4a" stroke-width="1.4" fill="none" />
<text x="426" y="188.0" font-size="3.8" fill="#000" text-anchor="middle" font-weight="bold" stroke="#000" stroke-width="0.2">2</text>
<text x="472.4" y="188.0" font-size="3.8" fill="#000" text-anchor="middle" font-weight="bold" stroke="#000" stroke-width="0.2" letter-spacing="-0.3">15</text>
<path d="M425,195.4H432.300M465.800,195.4H479" stroke="#4a4a4a" stroke-width="1.4" fill="none" />
<text x="426" y="194.6" font-size="3.8" fill="#000" text-anchor="middle" font-weight="bold" stroke="#000" stroke-width="0.2">3</text>
<text x="472.4" y="194.6" font-size="3.8" fill="#000" text-anchor="middle" font-weight="bold" stroke="#000" stroke-width="0.2" letter-spacing="-0.3">14</text>
<path d="M425,202.1H432.300M465.800,202.1H479" stroke="#4a4a4a" stroke-width="1.4" fill="none" />
<text x="426" y="201.29999999999998" font-size="3.8" fill="#000" text-anchor="middle" font-weight="bold" stroke="#000" stroke-width="0.2">4</text>
<text x="472.4" y="201.29999999999998" font-size="3.8" fill="#000" text-anchor="middle" font-weight="bold" stroke="#000" stroke-width="0.2" letter-spacing="-0.3">13</text>
<path d="M425,208.7H432.300M465.800,208.7H479" stroke="#4a4a4a" stroke-width="1.4" fill="none" />
<text x="426" y="207.89999999999998" font-size="3.8" fill="#000" text-anchor="middle" font-weight="bold" stroke="#000" stroke-width="0.2">5</text>
<text x="472.4" y="207.89999999999998" font-size="3.8" fill="#000" text-anchor="middle" font-weight="bold" stroke="#000" stroke-width="0.2" letter-spacing="-0.3">12</text>
<path d="M425,215.4H432.300M465.800,215.4H479" stroke="#4a4a4a" stroke-width="1.4" fill="none" />
<text x="426" y="214.6" font-size="3.8" fill="#000" text-anchor="middle" font-weight="bold" stroke="#000" stroke-width="0.2">6</text>
<text x="472.4" y="214.6" font-size="3.8" fill="#000" text-anchor="middle" font-weight="bold" stroke="#000" stroke-width="0.2" letter-spacing="-0.3">11</text>
<path d="M425,222.1H432.300M465.800,222.1H479" stroke="#4a4a4a" stroke-width="1.4" fill="none" />
<text x="426" y="221.29999999999998" font-size="3.8" fill="#000" text-anchor="middle" font-weight="bold" stroke="#000" stroke-width="0.2">7</text>
<text x="472.4" y="221.29999999999998" font-size="3.8" fill="#000" text-anchor="middle" font-weight="bold" stroke="#000" stroke-width="0.2" letter-spacing="-0.3">10</text>
<path d="M425,228.6H432.300M465.800,228.6H479" stroke="#4a4a4a" stroke-width="1.4" fill="none" />
<text x="426" y="227.79999999999998" font-size="3.8" fill="#000" text-anchor="middle" font-weight="bold" stroke="#000" stroke-width="0.2">8</text>
<text x="472.4" y="227.79999999999998" font-size="3.8" fill="#000" text-anchor="middle" font-weight="bold" stroke="#000" stroke-width="0.2" letter-spacing="-0.3">9</text>
<text transform="translate(435.6,184.7) scale(0.86,1)" font-size="6.9" fill="#111" stroke="#111" stroke-width="0.25">4</text>
<text transform="translate(462.2,184.7) scale(0.86,1)" font-size="6.9" fill="#111" stroke="#111" stroke-width="0.25" text-anchor="end">VCC</text>
<text transform="translate(435.6,191.3) scale(0.86,1)" font-size="6.9" fill="#111" stroke="#111" stroke-width="0.25">5</text>
<text transform="translate(462.2,191.3) scale(0.86,1)" font-size="6.9" fill="#111" stroke="#111" stroke-width="0.25" text-anchor="end">NC</text>
<text transform="translate(435.6,197.9) scale(0.86,1)" font-size="6.9" fill="#111" stroke="#111" stroke-width="0.25">6</text>
<text transform="translate(462.2,197.9) scale(0.86,1)" font-size="6.9" fill="#111" stroke="#111" stroke-width="0.25" text-anchor="end">D</text>
<text transform="translate(435.6,204.6) scale(0.86,1)" font-size="6.9" fill="#111" stroke="#111" stroke-width="0.25">7</text>
<text transform="translate(462.2,204.6) scale(0.86,1)" font-size="6.9" fill="#111" stroke="#111" stroke-width="0.25" text-anchor="end">3</text>
<text transform="translate(435.6,211.2) scale(0.86,1)" font-size="6.9" fill="#111" stroke="#111" stroke-width="0.25">8</text>
<text transform="translate(462.2,211.2) scale(0.86,1)" font-size="6.9" fill="#111" stroke="#111" stroke-width="0.25" text-anchor="end">2</text>
<text transform="translate(435.6,217.9) scale(0.86,1)" font-size="6.9" fill="#111" stroke="#111" stroke-width="0.25">C</text>
<text transform="translate(462.2,217.9) scale(0.86,1)" font-size="6.9" fill="#111" stroke="#111" stroke-width="0.25" text-anchor="end">1</text>
<text transform="translate(435.6,224.6) scale(0.86,1)" font-size="6.9" fill="#111" stroke="#111" stroke-width="0.25">B</text>
<text transform="translate(462.2,224.6) scale(0.86,1)" font-size="6.9" fill="#111" stroke="#111" stroke-width="0.25" text-anchor="end">9</text>
<text transform="translate(435.6,231.1) scale(0.86,1)" font-size="6.9" fill="#111" stroke="#111" stroke-width="0.25">GND</text>
<text transform="translate(462.2,231.1) scale(0.86,1)" font-size="6.9" fill="#111" stroke="#111" stroke-width="0.25" text-anchor="end">A</text>
<text x="441" y="174" font-size="4.4" fill="#5858e8" text-anchor="start"  font-style="italic">Coder</text>
<text transform="translate(432,244.2) scale(0.9,1)" font-size="7" fill="#111" stroke="#111" stroke-width="0.15">74147</text>
<path d="M425,228.600H417V242.500" stroke="#4a4a4a" stroke-width="1.1" fill="none" />
<path d="M411.500,242.700H423M413.500,245.200H421M415.500,247.600H419" stroke="#4a4a4a" stroke-width="1" fill="none" />
<text x="494.2" y="139.6" font-size="5" fill="#111" text-anchor="middle" font-weight="bold" >+Vcc</text>
<path d="M489,141.200H500" stroke="#111" stroke-width="1" fill="none" />
<path d="M494,141.200V151" stroke="#222" stroke-width="1" fill="none" />
<path d="M494,151V182.200H479" stroke="#f09494" stroke-width="1" fill="none" />
<path d="M425,182.2H409.2" stroke="#4a4a4a" stroke-width="1.4" fill="none" />
<path d="M409.2,181.5V339.9" stroke="#555" stroke-width="1.2" fill="none" />
<path d="M425,188.8H407.6" stroke="#4a4a4a" stroke-width="1.4" fill="none" />
<path d="M407.6,188.10000000000002V363.2" stroke="#555" stroke-width="1.2" fill="none" />
<path d="M425,195.4H405.8" stroke="#4a4a4a" stroke-width="1.4" fill="none" />
<path d="M405.8,194.70000000000002V389.7" stroke="#555" stroke-width="1.2" fill="none" />
<path d="M425,202.1H404.2" stroke="#4a4a4a" stroke-width="1.4" fill="none" />
<path d="M404.2,201.4V416.4" stroke="#555" stroke-width="1.2" fill="none" />
<path d="M425,208.7H402.4" stroke="#4a4a4a" stroke-width="1.4" fill="none" />
<path d="M402.4,208.0V439.59999999999997" stroke="#555" stroke-width="1.2" fill="none" />
<path d="M479,202.1H481.600" stroke="#4a4a4a" stroke-width="1.4" fill="none" />
<path d="M481.600,201.4V313.2" stroke="#555" stroke-width="1.2" fill="none" />
<path d="M479,208.7H483.200" stroke="#4a4a4a" stroke-width="1.4" fill="none" />
<path d="M483.200,208.0V289.59999999999997" stroke="#555" stroke-width="1.2" fill="none" />
<path d="M479,215.4H484.700" stroke="#4a4a4a" stroke-width="1.4" fill="none" />
<path d="M484.700,214.70000000000002V263.09999999999997" stroke="#555" stroke-width="1.2" fill="none" />
<path d="M479,222.1H480" stroke="#4a4a4a" stroke-width="1.4" fill="none" />
<path d="M480,221.4V462.8" stroke="#444" stroke-width="1.3" fill="none" />
<path d="M330.300,258.800V471" stroke="#f09494" stroke-width="1" fill="none" />
<path d="M330.300,471V480.500" stroke="#333" stroke-width="1" fill="none" />
<path d="M324.500,480.900H337" stroke="#111" stroke-width="1.1" fill="none" />
<text transform="translate(330.8,481.6) rotate(180)" font-size="5" font-weight="bold" fill="#111" text-anchor="middle">+Vcc</text>
<path d="M317,265.600V486.500" stroke="#4a4a4a" stroke-width="1.5" fill="none" />
<path d="M310,486.600H324M312.700,489.300H321.300M315.500,492H318.500" stroke="#4a4a4a" stroke-width="1.1" fill="none" />
<path d="M330.300,258.8H347.7" stroke="#f09494" stroke-width="1.3" fill="none" />
<path d="M347.7,258.8H351.2" stroke="#333" stroke-width="1" fill="none" />
<path d="M317,265.6H351.0" stroke="#4a4a4a" stroke-width="1.3" fill="none" />
<path d="M351.0,265.6l-1.2,1" stroke="#4a4a4a" stroke-width="0.8" fill="none" />
<path d="M350.7,265.6L360.2,262.4" stroke="#4a4a4a" stroke-width="1.1" fill="none" />
<path d="M360.2,262.4H485" stroke="#4a4a4a" stroke-width="1.4" fill="none" />
<circle cx="351.0" cy="258.8" r="0.75" fill="#111"/>
<circle cx="360.2" cy="262.4" r="0.75" fill="#111"/>
<text x="352.0" y="255.10000000000002" font-size="4.8" fill="#6060e8" text-anchor="start"  >[1]</text>
<path d="M330.300,285.5H347.7" stroke="#f09494" stroke-width="1.3" fill="none" />
<path d="M347.7,285.5H351.2" stroke="#333" stroke-width="1" fill="none" />
<path d="M317,292.5H351.0" stroke="#4a4a4a" stroke-width="1.3" fill="none" />
<path d="M351.0,292.5l-1.2,1" stroke="#4a4a4a" stroke-width="0.8" fill="none" />
<circle cx="330.3" cy="285.5" r="1.4" fill="#111"/>
<circle cx="317" cy="292.5" r="1.4" fill="#111"/>
<path d="M350.7,285.5L360.2,288.9" stroke="#4a4a4a" stroke-width="1.1" fill="none" />
<path d="M360.2,288.9H483.5" stroke="#4a4a4a" stroke-width="1.4" fill="none" />
<circle cx="351.0" cy="285.5" r="0.75" fill="#111"/>
<circle cx="360.2" cy="288.9" r="0.75" fill="#111"/>
<text x="352.0" y="281.8" font-size="4.8" fill="#6060e8" text-anchor="start"  >[2]</text>
<path d="M330.300,309.1H347.7" stroke="#f09494" stroke-width="1.3" fill="none" />
<path d="M347.7,309.1H351.2" stroke="#333" stroke-width="1" fill="none" />
<path d="M317,316.1H351.0" stroke="#4a4a4a" stroke-width="1.3" fill="none" />
<path d="M351.0,316.1l-1.2,1" stroke="#4a4a4a" stroke-width="0.8" fill="none" />
<circle cx="330.3" cy="309.1" r="1.4" fill="#111"/>
<circle cx="317" cy="316.1" r="1.4" fill="#111"/>
<path d="M350.7,309.1L360.2,312.5" stroke="#4a4a4a" stroke-width="1.1" fill="none" />
<path d="M360.2,312.5H482" stroke="#4a4a4a" stroke-width="1.4" fill="none" />
<circle cx="351.0" cy="309.1" r="0.75" fill="#111"/>
<circle cx="360.2" cy="312.5" r="0.75" fill="#111"/>
<text x="352.0" y="305.40000000000003" font-size="4.8" fill="#6060e8" text-anchor="start"  >[3]</text>
<path d="M330.300,335.8H348" stroke="#f09494" stroke-width="1.3" fill="none" />
<path d="M348,335.8H351.5" stroke="#333" stroke-width="1" fill="none" />
<path d="M317,342.8H351.3" stroke="#4a4a4a" stroke-width="1.3" fill="none" />
<path d="M351.3,342.8l-1.2,1" stroke="#4a4a4a" stroke-width="0.8" fill="none" />
<circle cx="330.3" cy="335.8" r="1.4" fill="#111"/>
<circle cx="317" cy="342.8" r="1.4" fill="#111"/>
<path d="M351,335.8L360.5,339.2" stroke="#4a4a4a" stroke-width="1.1" fill="none" />
<path d="M360.5,339.2H409.2" stroke="#4a4a4a" stroke-width="1.4" fill="none" />
<circle cx="351.3" cy="335.8" r="0.75" fill="#111"/>
<circle cx="360.5" cy="339.2" r="0.75" fill="#111"/>
<text x="352.3" y="332.1" font-size="4.8" fill="#6060e8" text-anchor="start"  >[4]</text>
<path d="M330.300,359.1H349.5" stroke="#f09494" stroke-width="1.3" fill="none" />
<path d="M349.5,359.1H353.0" stroke="#333" stroke-width="1" fill="none" />
<path d="M317,366.1H352.8" stroke="#4a4a4a" stroke-width="1.3" fill="none" />
<path d="M352.8,366.1l-1.2,1" stroke="#4a4a4a" stroke-width="0.8" fill="none" />
<circle cx="330.3" cy="359.1" r="1.4" fill="#111"/>
<circle cx="317" cy="366.1" r="1.4" fill="#111"/>
<path d="M352.5,359.1L362.0,362.5" stroke="#4a4a4a" stroke-width="1.1" fill="none" />
<path d="M362.0,362.5H407.6" stroke="#4a4a4a" stroke-width="1.4" fill="none" />
<circle cx="352.8" cy="359.1" r="0.75" fill="#111"/>
<circle cx="362.0" cy="362.5" r="0.75" fill="#111"/>
<text x="353.8" y="355.40000000000003" font-size="4.8" fill="#6060e8" text-anchor="start"  >[5]</text>
<path d="M330.300,385.6H350.75" stroke="#f09494" stroke-width="1.3" fill="none" />
<path d="M350.75,385.6H354.25" stroke="#333" stroke-width="1" fill="none" />
<path d="M317,392.6H354.05" stroke="#4a4a4a" stroke-width="1.3" fill="none" />
<path d="M354.05,392.6l-1.2,1" stroke="#4a4a4a" stroke-width="0.8" fill="none" />
<circle cx="330.3" cy="385.6" r="1.4" fill="#111"/>
<circle cx="317" cy="392.6" r="1.4" fill="#111"/>
<path d="M353.75,385.6L363.25,389" stroke="#4a4a4a" stroke-width="1.1" fill="none" />
<path d="M363.25,389H405.8" stroke="#4a4a4a" stroke-width="1.4" fill="none" />
<circle cx="354.05" cy="385.6" r="0.75" fill="#111"/>
<circle cx="363.25" cy="389" r="0.75" fill="#111"/>
<text x="355.05" y="381.90000000000003" font-size="4.8" fill="#6060e8" text-anchor="start"  >[6]</text>
<path d="M330.300,412.3H352.5" stroke="#f09494" stroke-width="1.3" fill="none" />
<path d="M352.5,412.3H356.0" stroke="#333" stroke-width="1" fill="none" />
<path d="M317,419.3H355.8" stroke="#4a4a4a" stroke-width="1.3" fill="none" />
<path d="M355.8,419.3l-1.2,1" stroke="#4a4a4a" stroke-width="0.8" fill="none" />
<circle cx="330.3" cy="412.3" r="1.4" fill="#111"/>
<circle cx="317" cy="419.3" r="1.4" fill="#111"/>
<path d="M355.5,412.3L365.0,415.7" stroke="#4a4a4a" stroke-width="1.1" fill="none" />
<path d="M365.0,415.7H404.2" stroke="#4a4a4a" stroke-width="1.4" fill="none" />
<circle cx="355.8" cy="412.3" r="0.75" fill="#111"/>
<circle cx="365.0" cy="415.7" r="0.75" fill="#111"/>
<text x="356.8" y="408.6" font-size="4.8" fill="#6060e8" text-anchor="start"  >[7]</text>
<path d="M330.300,435.5H355" stroke="#f09494" stroke-width="1.3" fill="none" />
<path d="M355,435.5H358.5" stroke="#333" stroke-width="1" fill="none" />
<path d="M317,442.5H358.3" stroke="#4a4a4a" stroke-width="1.3" fill="none" />
<path d="M358.3,442.5l-1.2,1" stroke="#4a4a4a" stroke-width="0.8" fill="none" />
<circle cx="330.3" cy="435.5" r="1.4" fill="#111"/>
<circle cx="317" cy="442.5" r="1.4" fill="#111"/>
<path d="M358,435.5L367.5,438.9" stroke="#4a4a4a" stroke-width="1.1" fill="none" />
<path d="M367.5,438.9H402.4" stroke="#4a4a4a" stroke-width="1.4" fill="none" />
<circle cx="358.3" cy="435.5" r="0.75" fill="#111"/>
<circle cx="367.5" cy="438.9" r="0.75" fill="#111"/>
<text x="359.3" y="431.8" font-size="4.8" fill="#6060e8" text-anchor="start"  >[8]</text>
<path d="M330.300,458.70000000000005H355" stroke="#f09494" stroke-width="1.3" fill="none" />
<path d="M355,458.70000000000005H358.5" stroke="#333" stroke-width="1" fill="none" />
<path d="M317,465.70000000000005H358.3" stroke="#4a4a4a" stroke-width="1.3" fill="none" />
<path d="M358.3,465.70000000000005l-1.2,1" stroke="#4a4a4a" stroke-width="0.8" fill="none" />
<circle cx="330.3" cy="458.70000000000005" r="1.4" fill="#111"/>
<circle cx="317" cy="465.70000000000005" r="1.4" fill="#111"/>
<path d="M358,458.70000000000005L367.5,462.1" stroke="#4a4a4a" stroke-width="1.1" fill="none" />
<path d="M367.5,462.1H480" stroke="#4a4a4a" stroke-width="1.4" fill="none" />
<circle cx="358.3" cy="458.70000000000005" r="0.75" fill="#111"/>
<circle cx="367.5" cy="462.1" r="0.75" fill="#111"/>
<text x="359.3" y="455.00000000000006" font-size="4.8" fill="#6060e8" text-anchor="start"  >[9]</text>
<circle cx="303.6" cy="199" r="1.5" fill="#111"/>
<circle cx="370" cy="195.7" r="1.5" fill="#111"/>
<circle cx="320.3" cy="248.8" r="1.5" fill="#111"/>
<circle cx="343.5" cy="245.6" r="1.5" fill="#111"/>
</svg>
<!--/CIRC-->
</body></html>
